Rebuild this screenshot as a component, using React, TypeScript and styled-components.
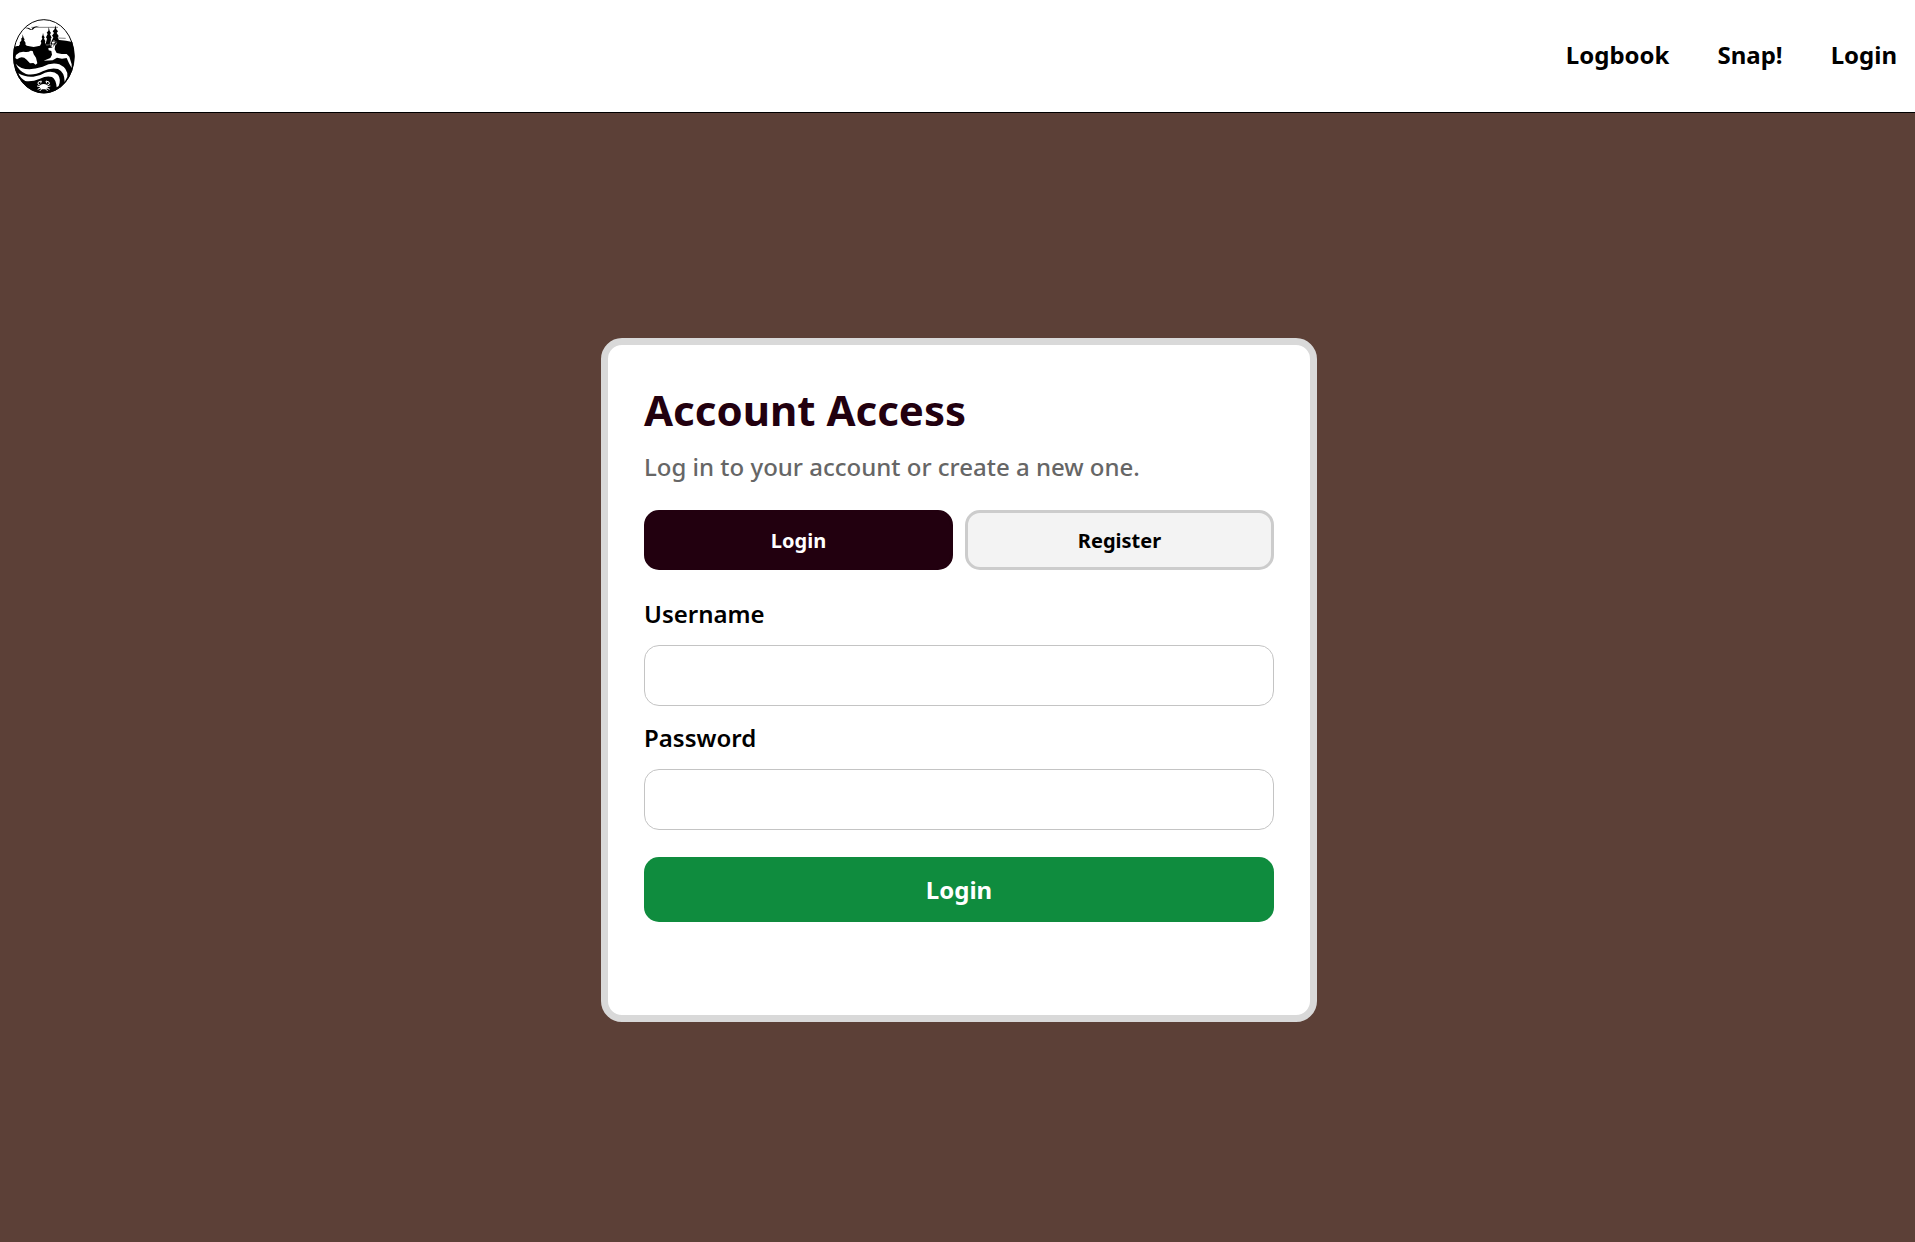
import React, { useState } from "react";
import styled, { createGlobalStyle } from "styled-components";

const GlobalStyle = createGlobalStyle`
  *, *::before, *::after { box-sizing: border-box; }
  body {
    margin: 0;
    background: #5c4037;
    color: #000;
    font-family: "Noto Sans", sans-serif;
    font-size: 24px;
    line-height: 32px;
  }
  button, input { font-family: inherit; }
`;

const Page = styled.div`
  display: flex;
  flex-direction: column;
  min-height: 100vh;
`;

const Header = styled.header`
  display: flex;
  align-items: center;
  justify-content: space-between;
  padding: 18px 18px 18px 12px;
  background: #fff;
  border-bottom: 1px solid #000;
`;

const HomeLink = styled.a`
  display: block;
  color: #000;
`;

const LogoDrawing = styled.svg`
  display: block;
  width: 64px;
  height: 76px;
`;

const Nav = styled.nav`
  display: flex;
  gap: 48px;
  padding-bottom: 2px;
`;

const NavLink = styled.a`
  color: #000;
  font-weight: 700;
  text-decoration: none;
`;

const Main = styled.main`
  flex: 1;
  display: flex;
  align-items: center;
  justify-content: center;
  padding: 37px 16px 32px 19px;
`;

const Card = styled.section`
  width: 100%;
  max-width: 716px;
  padding: 36px;
  background: #fff;
  border: 7px solid #d9d9d9;
  border-radius: 21px;
`;

const Title = styled.h1`
  margin: 0 0 12px;
  color: #22000f;
  font-size: 42px;
  line-height: 58px;
  font-weight: 700;
`;

const Intro = styled.p`
  margin: 0 0 27px;
  color: #666;
  font-weight: 500;
`;

const Tabs = styled.div`
  display: grid;
  grid-template-columns: 1fr 1fr;
  gap: 12px;
  margin-bottom: 28px;
`;

const Tab = styled.button<{ $active: boolean }>`
  height: 60px;
  border: 3px solid ${(p) => (p.$active ? "#22000f" : "#ccc")};
  border-radius: 15px;
  background: ${(p) => (p.$active ? "#22000f" : "#f3f3f3")};
  color: ${(p) => (p.$active ? "#fff" : "#000")};
  font-size: 20px;
  font-weight: 700;
  cursor: pointer;
`;

const Form = styled.form`
  display: flex;
  flex-direction: column;
  gap: 16px;
`;

const Field = styled.div`
  display: flex;
  flex-direction: column;
  gap: 15px;
`;

const Label = styled.label`
  font-weight: 600;
`;

const TextInput = styled.input`
  width: 100%;
  height: 61px;
  padding: 0 16px;
  border: 1px solid #c4c4c4;
  border-radius: 15px;
  background: #fff;
  font-size: 24px;
`;

const Submit = styled.button`
  height: 65px;
  margin-top: 11px;
  border: 0;
  border-radius: 15px;
  background: #0f8c3e;
  color: #fff;
  font-size: 24px;
  font-weight: 700;
  cursor: pointer;
`;

const Status = styled.p`
  min-height: 32px;
  margin: 25px 0 0;
`;

function Logo() {
  return (
    <LogoDrawing viewBox="36 54 192 228" role="img" aria-label="Home">
      <defs>
        <clipPath id="badge">
          <ellipse cx="131.500" cy="169" rx="92" ry="111" />
        </clipPath>
      </defs>
      <ellipse cx="131.500" cy="169" rx="92" ry="111" fill="#fff" />
      <g clipPath="url(#badge)">
        {/* shoreline and ground */}
        <path d="M36 142 L52 138 L80 137 L101 141 L120 137 L151 135 L178 120 L198 122 L228 128 V285 H36Z" />
        {/* trees */}
        <path d="M68 103 L71 114 L74 118 L72 121 L77 129 L76 133 L82 140 H55 L60 132 L59 128 L65 120 L63 117 L67 112Z" />
        <path d="M129 98 L131 107 L134 112 L132 116 L136 123 L135 128 L140 138 H120 L124 129 L122 124 L127 116 L125 111 L128 105Z" />
        <path d="M146 80 L149 93 L153 99 L150 103 L155 113 L152 116 L158 134 H136 L141 116 L138 112 L143 102 L140 98 L145 92Z" />
        <path d="M166 76 L169 88 L174 94 L170 99 L176 108 L173 113 L180 125 H154 L160 112 L156 107 L162 99 L158 94 L164 87Z" />
        {/* mist lines and gull */}
        <path d="M94 82H174M173 114L197 115" fill="none" stroke="#000" strokeWidth="1.500" />
        <path d="M71 83 L84 83 Q91 85 94 89 Q97 79 119 77 Q104 81 100 88 Q96 92 90 89 Q85 85 71 83Z" />
        {/* bear */}
        <path d="M48 165 Q60 153 76 156 Q86 157 92 152 L98 153 L101 163 L108 173 L112 190 L107 194 L100 189 L90 190 L80 179 Q70 169 59 173 L51 178 L46 174Z" fill="#fff" />
        {/* deer */}
        <path d="M145 144 L157 143 L155 134 L158 132 L160 140 L166 133 L164 148 L170 159 L185 162 L200 162 L208 170 L215 193 L215 204 L207 190 L200 174 L186 176 L171 173 L158 181 L131 182 L151 174 L156 164 L154 153 L146 151Z" fill="#fff" />
        <path d="M155 142 L151 130 L154 120M161 139 L162 120M166 136 L170 128" fill="none" stroke="#fff" strokeWidth="2" />
        {/* river */}
        <path d="M47 191 Q62 208 88 208 Q105 207 128 200 Q155 186 178 193 Q205 206 202 230 L194 246 Q194 216 174 207 Q152 202 128 214 Q100 228 78 222 Q56 212 47 191Z" fill="#fff" />
        <path d="M55 220 Q75 232 100 230 Q120 228 135 218 Q160 210 174 224 Q184 238 176 258 L170 262 Q168 238 156 231 Q140 226 120 236 Q96 246 76 243 Q62 236 55 220Z" fill="#fff" />
        {/* crab */}
        <ellipse cx="131" cy="260" rx="12" ry="8" fill="#fff" />
        <path d="M121 256 L114 252 L115 246 L124 243 L122 250M141 256 L148 252 L147 246 L138 243 L140 250M121 260 L111 258M121 264 L113 268M125 267 L119 273M141 260 L151 258M141 264 L149 268M137 267 L143 273" fill="none" stroke="#fff" strokeWidth="3" />
      </g>
      <ellipse cx="131.500" cy="169" rx="91" ry="110" fill="none" stroke="#000" strokeWidth="3" />
    </LogoDrawing>
  );
}

type Mode = "Login" | "Register";
const modes: Mode[] = ["Login", "Register"];

export default function App() {
  const [mode, setMode] = useState<Mode>("Login");
  return (
    <Page>
      <GlobalStyle />
      <Header>
        <HomeLink href="#">
          <Logo />
        </HomeLink>
        <Nav>
          <NavLink href="#logbook">Logbook</NavLink>
          <NavLink href="#snap">Snap!</NavLink>
          <NavLink href="#login">Login</NavLink>
        </Nav>
      </Header>
      <Main>
        <Card>
          <Title>Account Access</Title>
          <Intro>Log in to your account or create a new one.</Intro>
          <Tabs>
            {modes.map((name) => (
              <Tab
                key={name}
                type="button"
                aria-pressed={mode === name}
                $active={mode === name}
                onClick={() => setMode(name)}
              >
                {name}
              </Tab>
            ))}
          </Tabs>
          <Form onSubmit={(e) => e.preventDefault()}>
            <Field>
              <Label htmlFor="username">Username</Label>
              <TextInput id="username" type="text" autoComplete="username" />
            </Field>
            <Field>
              <Label htmlFor="password">Password</Label>
              <TextInput id="password" type="password" autoComplete="current-password" />
            </Field>
            <Submit type="submit">{mode}</Submit>
          </Form>
          <Status role="status" />
        </Card>
      </Main>
    </Page>
  );
}
